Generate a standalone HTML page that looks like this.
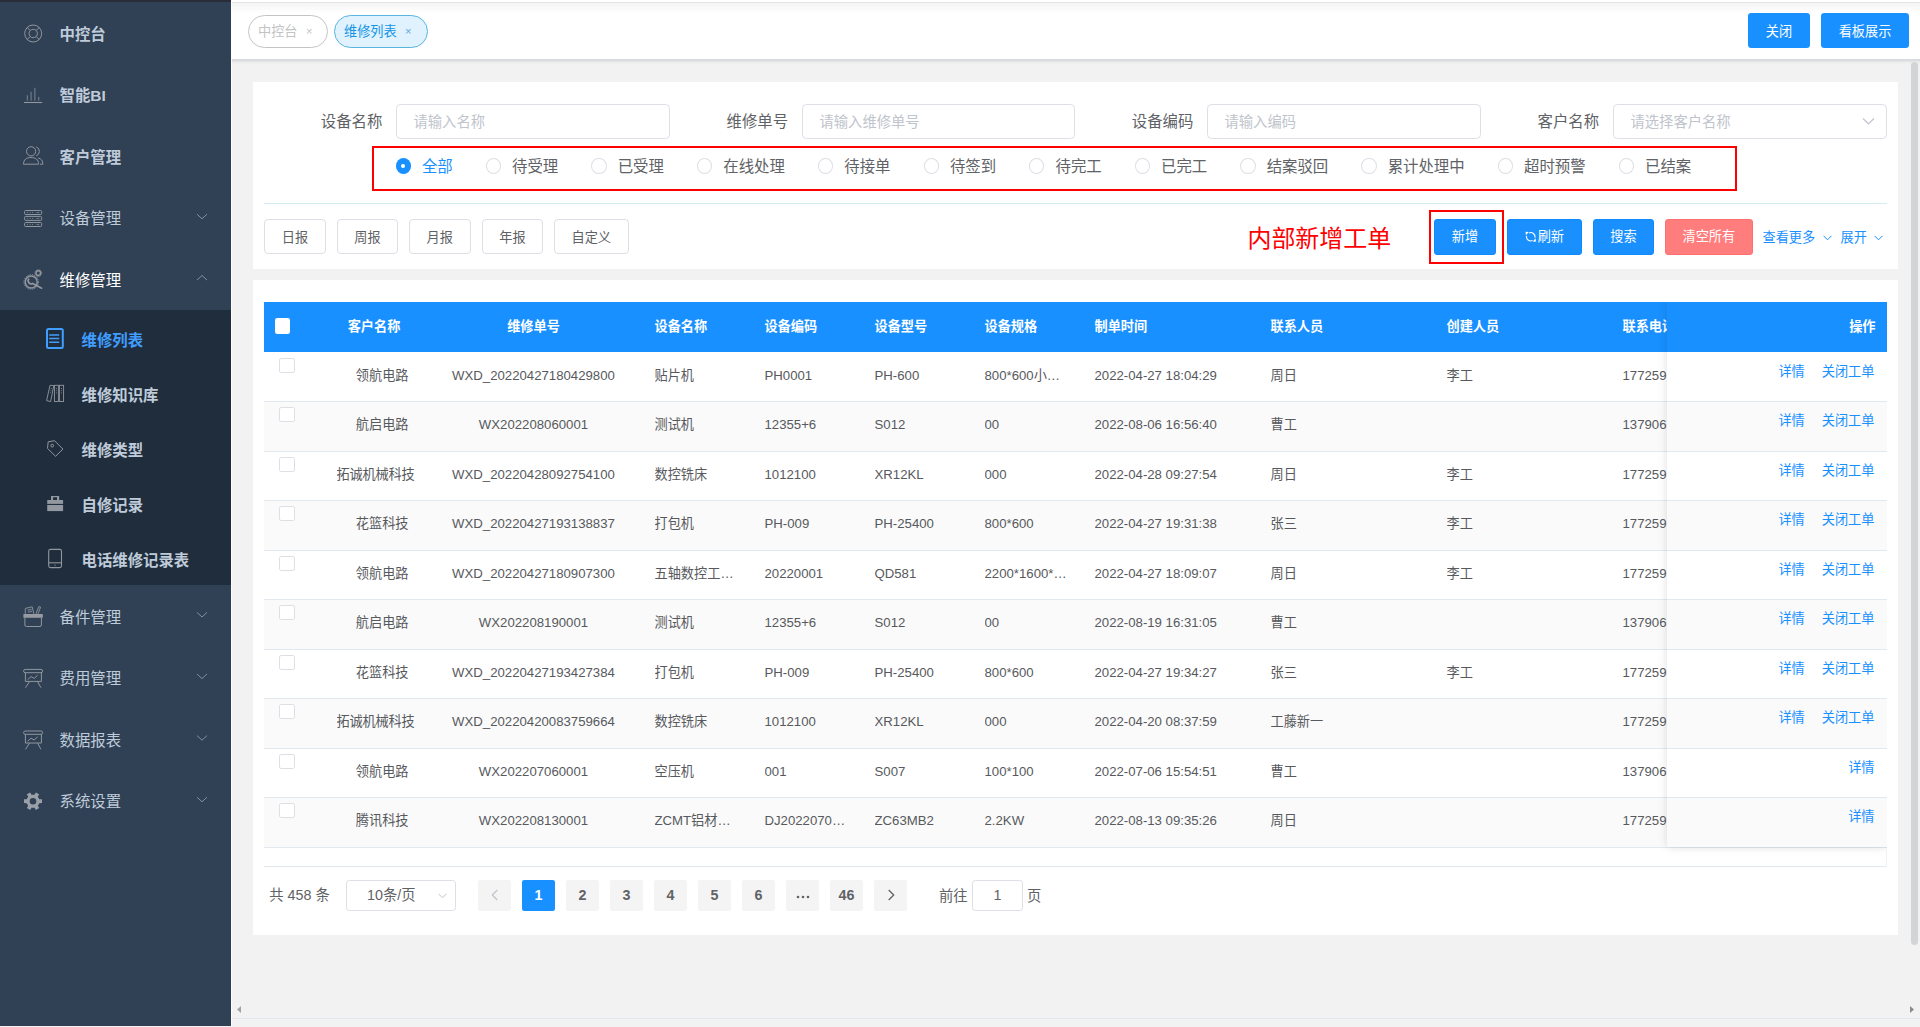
<!DOCTYPE html>
<html lang="zh-CN">
<head>
<meta charset="utf-8">
<title>维修列表</title>
<style>
*{box-sizing:border-box;margin:0;padding:0}
html,body{width:1920px;height:1027px;overflow:hidden}
body{font-family:"Liberation Sans","Noto Sans CJK SC",sans-serif;background:#f2f2f2;color:#606266;position:relative;font-size:13.2px}
.abs{position:absolute}
/* ---------- sidebar ---------- */
#side{position:absolute;left:0;top:0;width:231px;height:1026px;background:#304156;z-index:20}
#side .topstrip{position:absolute;left:0;top:0;width:231px;height:2px;background:#2a2d38}
.mi{position:absolute;left:0;width:231px;height:61.6px;color:#bfcbd9;font-weight:bold;font-size:15.4px;line-height:61.6px}
.mi .txt{position:absolute;left:59.5px;top:0;transform:translateY(0.5px);white-space:nowrap}
.mi svg.ic{position:absolute;left:22px;top:20px;width:22px;height:22px}
.mi svg.arr{position:absolute;left:196px;top:24px;width:12px;height:12px}
#sub{position:absolute;left:0;top:310px;width:231px;height:275px;background:#1f2d3d}
.si{position:absolute;left:0;width:231px;height:55px;color:#bfcbd9;font-weight:bold;font-size:15.4px;line-height:55px}
.si .txt{position:absolute;left:81.5px;top:0;transform:translateY(0.5px);white-space:nowrap}
.si svg.ic{position:absolute;left:44px;top:16.5px;width:22px;height:22px}
.si.act{color:#409eff}
/* ---------- tag bar ---------- */
#tagbar{position:absolute;left:231px;top:0;width:1689px;height:59px;background:#fff;z-index:10}
#tagbar .botsh{position:absolute;left:1px;top:59px;width:1688px;height:5px;background:linear-gradient(#d6dae2 0,#d6dae2 1px,#dcdcdc 1px,#dcdcdc 2px,#e6e6e6 2px,#e6e6e6 3px,#ececec 3px,#ececec 4px,#f0f0f0 4px,#f0f0f0 5px)}
#tagbar .topsh{position:absolute;left:1px;top:0;width:1688px;height:13px;background:linear-gradient(#fff 0,#fff 2px,#e5e5e5 2px,#e5e5e5 3px,#f3f3f3 3px,#f5f5f5 4px,#fff 13px)}
.tag{position:absolute;top:15px;height:33px;border:1px solid #c4c4c4;border-radius:17px;font-size:13.2px;line-height:31px;color:#c3c3c3;background:#fff;white-space:nowrap}
.tag .t{position:absolute;left:9px;top:0}
.tag .x{position:absolute;top:0;font-size:11px}
.tag.on{background:#dff2fd;border-color:#58b5e0;color:#1695e6}
.tag.on .x{color:#5aa6e0}
.bbtn{position:absolute;background:#1890ff;color:#fff;border-radius:3.3px;font-size:13.2px;text-align:center;white-space:nowrap}

/* ---------- cards ---------- */
.card{position:absolute;left:253px;width:1645px;background:#fff}
.flabel{position:absolute;top:104px;height:35px;line-height:35px;font-size:15.4px;color:#606266;text-align:right;white-space:nowrap}
.finput{position:absolute;top:104px;height:35px;border:1px solid #dcdfe6;border-radius:4.4px;background:#fff;font-size:14.3px;line-height:35px;color:#c0c4cc;padding-left:16.5px;white-space:nowrap}
#redbox{position:absolute;left:372px;top:146px;width:1365px;height:45px;border:2px solid #ff0000}
.radio{position:absolute;top:158px;height:16px;white-space:nowrap;font-size:15.4px;line-height:16px;color:#606266}
.radio i{position:absolute;left:0;top:0;width:15.4px;height:16px;border:1px solid #dcdfe6;border-radius:50%;background:#fff}
.radio span{position:absolute;left:26.4px;top:1px}
.radio.on{color:#1890ff}
.radio.on i{border:none;background:#1890ff}
.radio.on i:after{content:"";position:absolute;left:5.5px;top:5.5px;width:4.4px;height:4.4px;border-radius:50%;background:#fff}
.pbtn{position:absolute;top:219px;height:35px;border:1px solid #dcdfe6;border-radius:4px;background:#fff;color:#606266;font-size:13.2px;line-height:35px;text-align:center;white-space:nowrap}
.pbtn.blue{background:#1a90ff;border-color:#0f8aff;border-radius:3px;color:#fff;height:36px;line-height:34px}
.pbtn.red{background:#ff7d7d;border-color:#ff7070;border-radius:3px;color:#fff;height:36px;line-height:34px}
.lnk{position:absolute;color:#1890ff;font-size:13.2px;white-space:nowrap}

/* ---------- table ---------- */
#thead{position:absolute;left:264px;top:302px;width:1623px;height:50px;background:#1890ff}
.th{position:absolute;top:302px;height:49.5px;line-height:49.5px;color:#fff;font-weight:bold;font-size:13.2px;white-space:nowrap}
.row{position:absolute;left:264px;width:1623px;border-bottom:1px solid #e2e8f0;background:#fff}
.row.alt{background:#fafafa}
.td{position:absolute;transform:translateY(0.5px);height:45px;line-height:45px;font-size:13.2px;color:#57595d;white-space:nowrap;overflow:hidden}
.td.c{text-align:center}
.cb{position:absolute;left:15px;width:15.6px;height:15px;border:1px solid #dcdfe6;border-radius:2.2px;background:#fff}
.ops{position:absolute;right:12.5px;height:45px;line-height:45px;font-size:13.2px;color:#1890ff;white-space:nowrap}
.ops span{margin-left:17px}
#fixcol{position:absolute;left:1667px;top:302px;width:220px;height:545px;box-shadow:0 0 9px rgba(0,0,0,.13);clip-path:inset(0 0 -14px -14px);pointer-events:none}
/* ---------- pagination ---------- */
.pg{position:absolute;top:880px;height:31px;line-height:31px;font-size:14.3px;color:#606266;white-space:nowrap}
.pb{position:absolute;top:880px;width:33px;height:31px;line-height:31px;background:#f4f4f5;border-radius:2.2px;color:#606266;font-weight:bold;font-size:14.3px;text-align:center}
.pb.on{background:#1890ff;color:#fff}
</style>
</head>
<body>
<div id="side">
  <div class="topstrip"></div>
<svg class="abs" style="left:0;top:0;z-index:5" width="231" height="1027" viewBox="0 0 231 1027" fill="none" stroke="#92969d" stroke-width="1">
<g><circle cx="33.2" cy="33.5" r="8.5"/><circle cx="33.2" cy="33.5" r="4.2"/><path d="M27.2 27.5 L30.2 30.5 M39.2 27.5 L36.2 30.5 M27.2 39.5 L30.2 36.5 M39.2 39.5 L36.2 36.5"/></g>
<g><path d="M24 102.5 H42.2" stroke-width="1.1"/><path d="M27.3 95.2 V100.7 M31.1 91.8 V100.7 M34.9 87.8 V100.7 M38.8 96.9 V100.7" stroke="#7f8d99" stroke-width="0.9"/></g>
<g><circle cx="31.1" cy="151.3" r="4.6"/><path d="M36.2 146.9 A4.7 4.7 0 0 1 36.2 155.8"/><path d="M23.5 164.2 C23.5 159.5 26.5 157.5 31 157.5 C35.5 157.5 38.6 159.5 38.6 164.2 Z"/><path d="M38.2 158 C41.2 158.6 42.9 160.6 42.9 164.2 H40"/></g>
<rect x="24.6" y="210.5" width="17" height="4" rx="1"/>
<path d="M27 212.5 h1 M29.6 212.5 h1 M32 212.5 h1 M36.6 212.5 h2.6" stroke="#7f8d99" stroke-width="0.8"/>
<rect x="24.6" y="216.4" width="17" height="4" rx="1"/>
<path d="M27 218.4 h1 M29.6 218.4 h1 M32 218.4 h1 M36.6 218.4 h2.6" stroke="#7f8d99" stroke-width="0.8"/>
<rect x="24.6" y="222.5" width="17" height="4" rx="1"/>
<path d="M27 224.5 h1 M29.6 224.5 h1 M32 224.5 h1 M36.6 224.5 h2.6" stroke="#7f8d99" stroke-width="0.8"/>
<g><circle cx="31.2" cy="282" r="6" stroke-width="1.5"/><circle cx="31.2" cy="282" r="7.2" stroke-width="1" stroke-dasharray="1.3 1.0"/><path d="M28.6 279.2 A3 3 0 0 0 32.6 283.4 L41.6 288.2" stroke-width="1.7" stroke-linecap="round"/><circle cx="38.3" cy="273.1" r="2.3" stroke-width="1.5"/><circle cx="38.3" cy="273.1" r="3.4" stroke-width="0.9" stroke-dasharray="1.1 0.9"/></g>
<g stroke="#409eff"><rect x="47" y="329" width="15.8" height="19" rx="1.5" stroke-width="2"/><path d="M49.2 334.9 H59.2 M49.2 338.5 H59.2 M49.2 342.2 H59.2" stroke-width="1.5"/></g>
<g stroke-width="0.9"><rect x="54.4" y="385.3" width="4" height="16.2"/><rect x="59.4" y="385.3" width="4.2" height="16.2"/><path d="M50 385.3 L53.8 385.6 L50.6 401.6 L46.6 400.6 Z"/><path d="M56.4 388 v6 M61.5 388 v6 M51.4 388 l-1 5" stroke="#7f8791" stroke-dasharray="1 1.2"/></g>
<g><path d="M48.2 441.8 L54.5 440.7 L62.9 449.1 L55.6 456.3 L47.5 448.4 Z" stroke-linejoin="round"/><circle cx="52.2" cy="445.6" r="1.4"/></g>
<g fill="#9297a0" stroke="none"><rect x="47.2" y="500" width="15.9" height="3.9"/><rect x="47.2" y="505" width="15.9" height="6.1"/><path d="M51 500 V496 H59.2 V500 H57 V497.3 H53.1 V500 Z"/></g>
<g><rect x="48.7" y="549.4" width="12.8" height="18.2" rx="1.8" stroke-width="1.1"/><path d="M48.7 562.8 H61.5" stroke-width="1.1"/><path d="M54.5 565.2 h1.2" stroke-width="1.1"/></g>
<g><rect x="23.4" y="614" width="19.4" height="3.8" fill="#969aa1" stroke="none"/><path d="M24.9 617.8 V625 Q24.9 626.5 26.4 626.5 H39.9 Q41.4 626.5 41.4 625 V617.8"/><path d="M25.3 613.8 V608.4 L32.2 606.8 L33.8 613.8 M27.5 610.2 l4 -0.9 M28 612.2 l4 -0.9" stroke-width="0.9"/><path d="M36 613.8 L38.8 606.6 L40.6 607.2 L38 613.8" stroke-width="0.9"/></g>
<g><rect x="23.6" y="669.4" width="19" height="3.3" rx="1.6"/><path d="M25.4 672.7 V681.4 H41.4 V672.7"/><path d="M29.5 681.6 L25.5 687.7 M37.6 681.6 L40.9 687.7"/><path d="M27.6 679.6 L31.1 676.6 L34.2 678.4 L37.7 675.2"/></g>
<g><rect x="23.6" y="731.0" width="19" height="3.3" rx="1.6"/><path d="M25.4 734.3000000000001 V743.0 H41.4 V734.3000000000001"/><path d="M29.5 743.2 L25.5 749.3000000000001 M37.6 743.2 L40.9 749.3000000000001"/><path d="M27.6 741.2 L31.1 738.2 L34.2 740.0 L37.7 736.8000000000001"/></g>
<path d="M39.31 799.27 L42.00 799.29 L42.00 803.11 L39.31 803.13 L37.83 805.70 L39.16 808.04 L35.84 809.95 L34.48 807.63 L31.52 807.63 L30.16 809.95 L26.84 808.04 L28.17 805.70 L26.69 803.13 L24.00 803.11 L24.00 799.29 L26.69 799.27 L28.17 796.70 L26.84 794.36 L30.16 792.45 L31.52 794.77 L34.48 794.77 L35.84 792.45 L39.16 794.36 L37.83 796.70 Z M36.3 801.2 A3.3 3.3 0 1 0 29.7 801.2 A3.3 3.3 0 1 0 36.3 801.2 Z" fill="#9a9fa8" fill-rule="evenodd" stroke="none"/>
<path d="M197 214.2 L202 218.8 L207 214.2" fill="none" stroke="#8d98a5" stroke-width="0.9"/>
<path d="M197 280.1 L202 275.5 L207 280.1" fill="none" stroke="#8d98a5" stroke-width="0.9"/>
<path d="M197 612.4000000000001 L202 617.0 L207 612.4000000000001" fill="none" stroke="#8d98a5" stroke-width="0.9"/>
<path d="M197 674.0 L202 678.5999999999999 L207 674.0" fill="none" stroke="#8d98a5" stroke-width="0.9"/>
<path d="M197 735.6 L202 740.1999999999999 L207 735.6" fill="none" stroke="#8d98a5" stroke-width="0.9"/>
<path d="M197 797.2 L202 801.8 L207 797.2" fill="none" stroke="#8d98a5" stroke-width="0.9"/>
</svg>
  <div class="mi" style="top:2.6px"><span class="txt">中控台</span></div>
  <div class="mi" style="top:64.2px"><span class="txt">智能BI</span></div>
  <div class="mi" style="top:125.8px"><span class="txt">客户管理</span></div>
  <div class="mi" style="top:187.4px"><span class="txt" style="font-weight:normal">设备管理</span></div>
  <div class="mi" style="top:249px;color:#fff"><span class="txt" style="font-weight:normal">维修管理</span></div>
  <div id="sub">
    <div class="si act" style="top:1.5px"><span class="txt">维修列表</span></div>
    <div class="si" style="top:56.5px"><span class="txt">维修知识库</span></div>
    <div class="si" style="top:111.5px"><span class="txt">维修类型</span></div>
    <div class="si" style="top:166.5px"><span class="txt">自修记录</span></div>
    <div class="si" style="top:221.5px"><span class="txt">电话维修记录表</span></div>
  </div>
  <div class="mi" style="top:585.6px"><span class="txt" style="font-weight:normal">备件管理</span></div>
  <div class="mi" style="top:647.2px"><span class="txt" style="font-weight:normal">费用管理</span></div>
  <div class="mi" style="top:708.8px"><span class="txt" style="font-weight:normal">数据报表</span></div>
  <div class="mi" style="top:770.4px"><span class="txt" style="font-weight:normal">系统设置</span></div>
</div>

<div id="tagbar">
  <div class="topsh"></div><div class="botsh"></div>
  <div class="tag" style="left:17px;width:80px"><span class="t">中控台</span><span class="x" style="left:57px">×</span></div>
  <div class="tag on" style="left:103px;width:94px"><span class="t">维修列表</span><span class="x" style="left:70px">×</span></div>
  <div class="bbtn" style="left:1517px;top:13px;width:62px;height:35px;line-height:37px">关闭</div>
  <div class="bbtn" style="left:1590px;top:13px;width:88px;height:35px;line-height:37px">看板展示</div>
</div>


<div class="card" style="top:82px;height:187px"></div>
<div class="card" style="top:280px;height:655px"></div>

<div class="flabel" style="left:263.6px;width:118.8px">设备名称</div>
<div class="finput" style="left:396px;width:273.5px">请输入名称</div>
<div class="flabel" style="left:669.3px;width:118.8px">维修单号</div>
<div class="finput" style="left:802px;width:273px">请输入维修单号</div>
<div class="flabel" style="left:1074.6px;width:118.8px">设备编码</div>
<div class="finput" style="left:1207px;width:274px">请输入编码</div>
<div class="flabel" style="left:1480.3px;width:118.8px">客户名称</div>
<div class="finput" style="left:1613px;width:274px">请选择客户名称<svg style="position:absolute;right:11px;top:12px" width="13" height="9" viewBox="0 0 13 9"><path d="M1 1.5 L6.5 7 L12 1.5" fill="none" stroke="#c0c4cc" stroke-width="1.2"/></svg></div>

<div id="redbox"></div>
<div class="radio on" style="left:395.5px"><i></i><span>全部</span></div>
<div class="radio" style="left:485.7px"><i></i><span>待受理</span></div>
<div class="radio" style="left:591.3px"><i></i><span>已受理</span></div>
<div class="radio" style="left:696.9px"><i></i><span>在线处理</span></div>
<div class="radio" style="left:817.9px"><i></i><span>待接单</span></div>
<div class="radio" style="left:923.5px"><i></i><span>待签到</span></div>
<div class="radio" style="left:1029.1px"><i></i><span>待完工</span></div>
<div class="radio" style="left:1134.7px"><i></i><span>已完工</span></div>
<div class="radio" style="left:1240.3px"><i></i><span>结案驳回</span></div>
<div class="radio" style="left:1361.3px"><i></i><span>累计处理中</span></div>
<div class="radio" style="left:1497.7px"><i></i><span>超时预警</span></div>
<div class="radio" style="left:1618.7px"><i></i><span>已结案</span></div>

<div class="abs" style="left:264px;top:203px;width:1623px;height:1px;background:#d3ecf3"></div>

<div class="pbtn" style="left:264px;width:62px">日报</div>
<div class="pbtn" style="left:337px;width:61px">周报</div>
<div class="pbtn" style="left:409px;width:61.5px">月报</div>
<div class="pbtn" style="left:482px;width:61px">年报</div>
<div class="pbtn" style="left:554px;width:74.5px">自定义</div>

<div class="abs" style="left:1247.5px;top:220.5px;height:35px;line-height:35px;font-size:23.95px;color:#ff0000;white-space:nowrap">内部新增工单</div>
<div class="abs" style="left:1429px;top:210px;width:75px;height:54px;border:2px solid #ff0000"></div>
<div class="pbtn blue" style="left:1434px;width:62px">新增</div>
<div class="pbtn blue" style="left:1507px;width:74.7px"><svg style="vertical-align:-1.5px;margin-right:1.5px" width="11.5" height="11.5" viewBox="0 0 12 12"><path d="M4.2 2 A4.4 4.4 0 0 1 10.33 6.9 M7.8 10 A4.4 4.4 0 0 1 1.67 5.1" fill="none" stroke="#fff" stroke-width="1.15"/><path d="M0.6 0.8 L4 1.1 L0.9 4.4 Z M11.4 11.2 L8 10.9 L11.1 7.6 Z" fill="#fff"/></svg>刷新</div>
<div class="pbtn blue" style="left:1593px;width:61px">搜索</div>
<div class="pbtn red" style="left:1665px;width:87.7px">清空所有</div>
<div class="lnk" style="left:1762.5px;top:220px;line-height:35px">查看更多<svg style="margin-left:7.5px;vertical-align:1px" width="9" height="6" viewBox="0 0 9 6"><path d="M.5 .8 L4.5 4.8 L8.5 .8" fill="none" stroke="#1890ff" stroke-width="1"/></svg></div>
<div class="lnk" style="left:1840.5px;top:220px;line-height:35px">展开<svg style="margin-left:7.5px;vertical-align:1px" width="9" height="6" viewBox="0 0 9 6"><path d="M.5 .8 L4.5 4.8 L8.5 .8" fill="none" stroke="#1890ff" stroke-width="1"/></svg></div>

<div id="thead"></div>
<div class="abs" style="left:275px;top:318px;width:15.4px;height:15.6px;background:#fff;border-radius:2.2px"></div>
<div class="th" style="left:324.5px;width:99px;text-align:center">客户名称</div>
<div class="th" style="left:423.5px;width:220px;text-align:center">维修单号</div>
<div class="th" style="left:654.5px">设备名称</div>
<div class="th" style="left:764.5px">设备编码</div>
<div class="th" style="left:874.5px">设备型号</div>
<div class="th" style="left:984.5px">设备规格</div>
<div class="th" style="left:1094.5px">制单时间</div>
<div class="th" style="left:1270.5px">联系人员</div>
<div class="th" style="left:1446.5px">创建人员</div>
<div class="th" style="left:1622.5px">联系电话</div>
<div class="row" style="top:352px;height:50px"><i class="cb" style="top:6px"></i><div class="td" style="left:91.8px;top:0px;width:90px">领航电路</div><div class="td c" style="left:159.5px;top:0px;width:220px">WXD_20220427180429800</div><div class="td" style="left:390.5px;top:0px;width:88px">贴片机</div><div class="td" style="left:500.5px;top:0px;width:88px">PH0001</div><div class="td" style="left:610.5px;top:0px;width:88px">PH-600</div><div class="td" style="left:720.5px;top:0px;width:88px">800*600小…</div><div class="td" style="left:830.5px;top:0px;width:154px">2022-04-27 18:04:29</div><div class="td" style="left:1006.5px;top:0px;width:154px">周日</div><div class="td" style="left:1182.5px;top:0px;width:154px">李工</div><div class="td" style="left:1358.5px;top:0px;width:154px">177259</div><div class="abs" style="left:1403px;top:0;width:220px;height:49px;background:#fff"><div class="ops" style="top:-3px"><span>详情</span><span>关闭工单</span></div></div></div>
<div class="row alt" style="top:402px;height:50px"><i class="cb" style="top:5px"></i><div class="td" style="left:91.8px;top:-1px;width:90px">航启电路</div><div class="td c" style="left:159.5px;top:-1px;width:220px">WX202208060001</div><div class="td" style="left:390.5px;top:-1px;width:88px">测试机</div><div class="td" style="left:500.5px;top:-1px;width:88px">12355+6</div><div class="td" style="left:610.5px;top:-1px;width:88px">S012</div><div class="td" style="left:720.5px;top:-1px;width:88px">00</div><div class="td" style="left:830.5px;top:-1px;width:154px">2022-08-06 16:56:40</div><div class="td" style="left:1006.5px;top:-1px;width:154px">曹工</div><div class="td" style="left:1358.5px;top:-1px;width:154px">137906</div><div class="abs" style="left:1403px;top:0;width:220px;height:49px;background:#fafafa"><div class="ops" style="top:-4px"><span>详情</span><span>关闭工单</span></div></div></div>
<div class="row" style="top:452px;height:49px"><i class="cb" style="top:5px"></i><div class="td" style="left:72.6px;top:-1px;width:90px;letter-spacing:-0.2px">拓诚机械科技</div><div class="td c" style="left:159.5px;top:-1px;width:220px">WXD_20220428092754100</div><div class="td" style="left:390.5px;top:-1px;width:88px">数控铣床</div><div class="td" style="left:500.5px;top:-1px;width:88px">1012100</div><div class="td" style="left:610.5px;top:-1px;width:88px">XR12KL</div><div class="td" style="left:720.5px;top:-1px;width:88px">000</div><div class="td" style="left:830.5px;top:-1px;width:154px">2022-04-28 09:27:54</div><div class="td" style="left:1006.5px;top:-1px;width:154px">周日</div><div class="td" style="left:1182.5px;top:-1px;width:154px">李工</div><div class="td" style="left:1358.5px;top:-1px;width:154px">177259</div><div class="abs" style="left:1403px;top:0;width:220px;height:48px;background:#fff"><div class="ops" style="top:-4px"><span>详情</span><span>关闭工单</span></div></div></div>
<div class="row alt" style="top:501px;height:50px"><i class="cb" style="top:5px"></i><div class="td" style="left:91.8px;top:-1px;width:90px">花篮科技</div><div class="td c" style="left:159.5px;top:-1px;width:220px">WXD_20220427193138837</div><div class="td" style="left:390.5px;top:-1px;width:88px">打包机</div><div class="td" style="left:500.5px;top:-1px;width:88px">PH-009</div><div class="td" style="left:610.5px;top:-1px;width:88px">PH-25400</div><div class="td" style="left:720.5px;top:-1px;width:88px">800*600</div><div class="td" style="left:830.5px;top:-1px;width:154px">2022-04-27 19:31:38</div><div class="td" style="left:1006.5px;top:-1px;width:154px">张三</div><div class="td" style="left:1182.5px;top:-1px;width:154px">李工</div><div class="td" style="left:1358.5px;top:-1px;width:154px">177259</div><div class="abs" style="left:1403px;top:0;width:220px;height:49px;background:#fafafa"><div class="ops" style="top:-4px"><span>详情</span><span>关闭工单</span></div></div></div>
<div class="row" style="top:551px;height:49px"><i class="cb" style="top:5px"></i><div class="td" style="left:91.8px;top:-1px;width:90px">领航电路</div><div class="td c" style="left:159.5px;top:-1px;width:220px">WXD_20220427180907300</div><div class="td" style="left:390.5px;top:-1px;width:88px">五轴数控工…</div><div class="td" style="left:500.5px;top:-1px;width:88px">20220001</div><div class="td" style="left:610.5px;top:-1px;width:88px">QD581</div><div class="td" style="left:720.5px;top:-1px;width:88px">2200*1600*…</div><div class="td" style="left:830.5px;top:-1px;width:154px">2022-04-27 18:09:07</div><div class="td" style="left:1006.5px;top:-1px;width:154px">周日</div><div class="td" style="left:1182.5px;top:-1px;width:154px">李工</div><div class="td" style="left:1358.5px;top:-1px;width:154px">177259</div><div class="abs" style="left:1403px;top:0;width:220px;height:48px;background:#fff"><div class="ops" style="top:-4px"><span>详情</span><span>关闭工单</span></div></div></div>
<div class="row alt" style="top:600px;height:50px"><i class="cb" style="top:5px"></i><div class="td" style="left:91.8px;top:-1px;width:90px">航启电路</div><div class="td c" style="left:159.5px;top:-1px;width:220px">WX202208190001</div><div class="td" style="left:390.5px;top:-1px;width:88px">测试机</div><div class="td" style="left:500.5px;top:-1px;width:88px">12355+6</div><div class="td" style="left:610.5px;top:-1px;width:88px">S012</div><div class="td" style="left:720.5px;top:-1px;width:88px">00</div><div class="td" style="left:830.5px;top:-1px;width:154px">2022-08-19 16:31:05</div><div class="td" style="left:1006.5px;top:-1px;width:154px">曹工</div><div class="td" style="left:1358.5px;top:-1px;width:154px">137906</div><div class="abs" style="left:1403px;top:0;width:220px;height:49px;background:#fafafa"><div class="ops" style="top:-4px"><span>详情</span><span>关闭工单</span></div></div></div>
<div class="row" style="top:650px;height:49px"><i class="cb" style="top:5px"></i><div class="td" style="left:91.8px;top:-1px;width:90px">花篮科技</div><div class="td c" style="left:159.5px;top:-1px;width:220px">WXD_20220427193427384</div><div class="td" style="left:390.5px;top:-1px;width:88px">打包机</div><div class="td" style="left:500.5px;top:-1px;width:88px">PH-009</div><div class="td" style="left:610.5px;top:-1px;width:88px">PH-25400</div><div class="td" style="left:720.5px;top:-1px;width:88px">800*600</div><div class="td" style="left:830.5px;top:-1px;width:154px">2022-04-27 19:34:27</div><div class="td" style="left:1006.5px;top:-1px;width:154px">张三</div><div class="td" style="left:1182.5px;top:-1px;width:154px">李工</div><div class="td" style="left:1358.5px;top:-1px;width:154px">177259</div><div class="abs" style="left:1403px;top:0;width:220px;height:48px;background:#fff"><div class="ops" style="top:-4px"><span>详情</span><span>关闭工单</span></div></div></div>
<div class="row alt" style="top:699px;height:50px"><i class="cb" style="top:5px"></i><div class="td" style="left:72.6px;top:-1px;width:90px;letter-spacing:-0.2px">拓诚机械科技</div><div class="td c" style="left:159.5px;top:-1px;width:220px">WXD_20220420083759664</div><div class="td" style="left:390.5px;top:-1px;width:88px">数控铣床</div><div class="td" style="left:500.5px;top:-1px;width:88px">1012100</div><div class="td" style="left:610.5px;top:-1px;width:88px">XR12KL</div><div class="td" style="left:720.5px;top:-1px;width:88px">000</div><div class="td" style="left:830.5px;top:-1px;width:154px">2022-04-20 08:37:59</div><div class="td" style="left:1006.5px;top:-1px;width:154px">工藤新一</div><div class="td" style="left:1358.5px;top:-1px;width:154px">177259</div><div class="abs" style="left:1403px;top:0;width:220px;height:49px;background:#fafafa"><div class="ops" style="top:-4px"><span>详情</span><span>关闭工单</span></div></div></div>
<div class="row" style="top:749px;height:49px"><i class="cb" style="top:5px"></i><div class="td" style="left:91.8px;top:-1px;width:90px">领航电路</div><div class="td c" style="left:159.5px;top:-1px;width:220px">WX202207060001</div><div class="td" style="left:390.5px;top:-1px;width:88px">空压机</div><div class="td" style="left:500.5px;top:-1px;width:88px">001</div><div class="td" style="left:610.5px;top:-1px;width:88px">S007</div><div class="td" style="left:720.5px;top:-1px;width:88px">100*100</div><div class="td" style="left:830.5px;top:-1px;width:154px">2022-07-06 15:54:51</div><div class="td" style="left:1006.5px;top:-1px;width:154px">曹工</div><div class="td" style="left:1358.5px;top:-1px;width:154px">137906</div><div class="abs" style="left:1403px;top:0;width:220px;height:48px;background:#fff"><div class="ops" style="top:-4px"><span>详情</span></div></div></div>
<div class="row alt" style="top:798px;height:50px"><i class="cb" style="top:5px"></i><div class="td" style="left:91.8px;top:-1px;width:90px">腾讯科技</div><div class="td c" style="left:159.5px;top:-1px;width:220px">WX202208130001</div><div class="td" style="left:390.5px;top:-1px;width:88px">ZCMT铝材…</div><div class="td" style="left:500.5px;top:-1px;width:88px">DJ2022070…</div><div class="td" style="left:610.5px;top:-1px;width:88px">ZC63MB2</div><div class="td" style="left:720.5px;top:-1px;width:88px">2.2KW</div><div class="td" style="left:830.5px;top:-1px;width:154px">2022-08-13 09:35:26</div><div class="td" style="left:1006.5px;top:-1px;width:154px">周日</div><div class="td" style="left:1358.5px;top:-1px;width:154px">177259</div><div class="abs" style="left:1403px;top:0;width:220px;height:49px;background:#fafafa"><div class="ops" style="top:-4px"><span>详情</span></div></div></div>
<div class="abs" style="left:1667px;top:302px;width:220px;height:50px;background:#1890ff"></div>
<div class="th" style="left:1667px;width:208.5px;text-align:right">操作</div>
<div id="fixcol"></div>
<div class="abs" style="left:264px;top:866px;width:1623px;height:1px;background:#e2e8f0"></div>
<div class="abs" style="left:1886px;top:848px;width:1px;height:19px;background:#eef1f5"></div>
<div class="pg" style="left:269.3px">共 458 条</div>
<div class="abs" style="left:346px;top:880px;width:110px;height:31px;border:1px solid #dcdfe6;border-radius:3.3px;background:#fff;font-size:14.3px;line-height:29px;color:#606266;padding-left:20px">10条/页<svg style="position:absolute;right:8px;top:12px" width="9" height="6" viewBox="0 0 9 6"><path d="M.5 .8 L4.5 4.8 L8.5 .8" fill="none" stroke="#c0c4cc" stroke-width="1"/></svg></div>
<div class="pb" style="left:478px"><svg width="8" height="12" viewBox="0 0 8 12" style="vertical-align:-1px"><path d="M6.3 1 L1.3 6 L6.3 11" fill="none" stroke="#c0c4cc" stroke-width="1.3"/></svg></div>
<div class="pb on" style="left:522px">1</div>
<div class="pb" style="left:566px">2</div>
<div class="pb" style="left:610px">3</div>
<div class="pb" style="left:654px">4</div>
<div class="pb" style="left:698px">5</div>
<div class="pb" style="left:742px">6</div>
<div class="pb" style="left:786px"><svg width="14" height="4" viewBox="0 0 14 4" style="vertical-align:1px"><circle cx="2" cy="2" r="1.3" fill="#606266"/><circle cx="7" cy="2" r="1.3" fill="#606266"/><circle cx="12" cy="2" r="1.3" fill="#606266"/></svg></div>
<div class="pb" style="left:830px">46</div>
<div class="pb" style="left:874px"><svg width="8" height="12" viewBox="0 0 8 12" style="vertical-align:-1px"><path d="M1.7 1 L6.7 6 L1.7 11" fill="none" stroke="#606266" stroke-width="1.3"/></svg></div>
<div class="pg" style="left:939px;top:881px">前往</div>
<div class="abs" style="left:972px;top:880px;width:51px;height:31px;border:1px solid #dcdfe6;border-radius:3.3px;background:#fff;font-size:14.3px;line-height:29px;color:#606266;text-align:center">1</div>
<div class="pg" style="left:1027px;top:881px">页</div>
<div class="abs" style="left:1911px;top:62px;width:7px;height:883px;border-radius:3.5px;background:#d3d4d6;z-index:12"></div>
<div class="abs" style="left:231px;top:1018px;width:1689px;height:1px;background:#e2e6ee"></div>
<div class="abs" style="left:231px;top:60px;width:1px;height:967px;background:#fcfcfb"></div>
<svg class="abs" style="left:237px;top:1006px" width="4" height="7" viewBox="0 0 4 7"><path d="M4 0 V7 L0 3.5 Z" fill="#a3a3a3"/></svg>
<svg class="abs" style="left:1910px;top:1006px" width="4" height="7" viewBox="0 0 4 7"><path d="M0 0 V7 L4 3.5 Z" fill="#8c8c8c"/></svg>
</body>
</html>
